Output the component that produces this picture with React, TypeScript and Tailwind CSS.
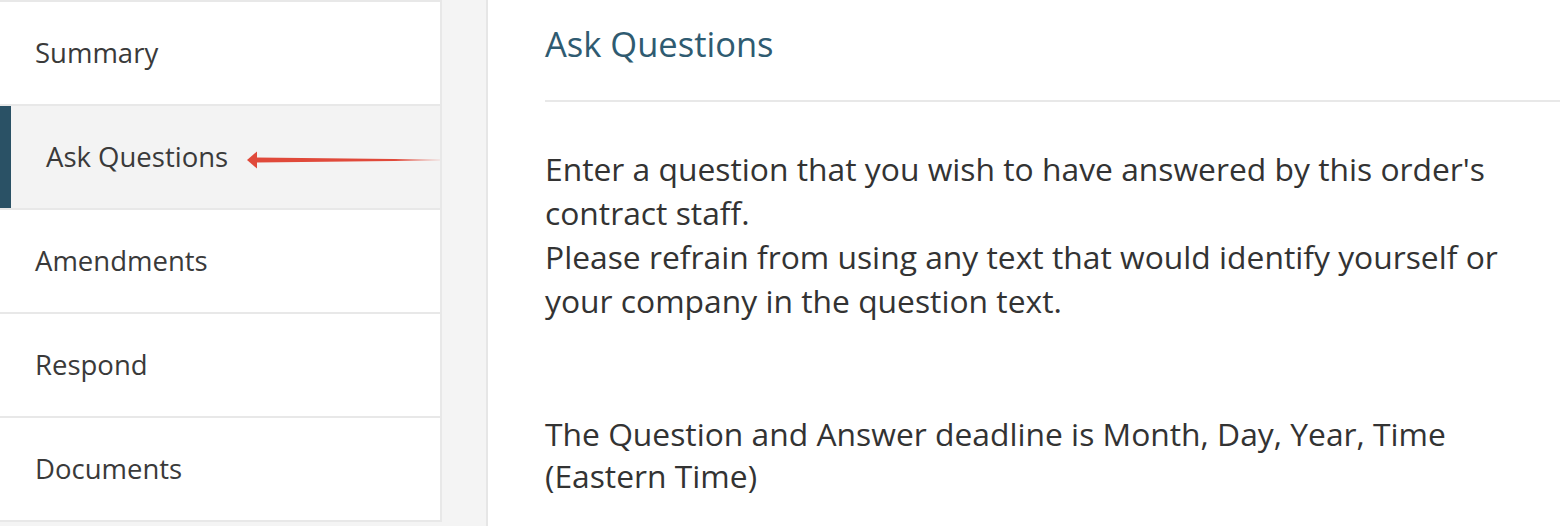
import React from "react";

const navItems = ["Summary", "Ask Questions", "Amendments", "Respond", "Documents"];

function Arrow() {
  return (
    <svg className="absolute left-[246px] top-[42px]" width="196" height="24" viewBox="0 0 196 24">
      <defs>
        <linearGradient id="shaft" x1="0" x2="1" y1="0" y2="0">
          <stop offset="0" stopColor="#e0493a" />
          <stop offset="0.75" stopColor="#e0493a" />
          <stop offset="1" stopColor="#e0493a" stopOpacity="0.15" />
        </linearGradient>
      </defs>
      <path d="M10 9.5 L194 11.6 L194 12.4 L10 14.5 Z" fill="url(#shaft)" />
      <path d="M1 12 L11 3.5 L11 20.5 Z" fill="#e0493a" />
    </svg>
  );
}

function NavItem({ label, active }: { label: string; active: boolean }) {
  return (
    <div
      className={`relative flex h-[104px] items-center border-b-2 border-[#e8e8e8] ${
        active ? "bg-[#f3f3f3] pl-[46px]" : "bg-white pl-[35px]"
      }`}
    >
      {active ? <div className="absolute left-0 top-0 h-full w-[11px] bg-[#2a5165]" /> : null}
      <span className="text-[27.5px] leading-[36px] text-[#3a3a3a]">{label}</span>
      {active ? <Arrow /> : null}
    </div>
  );
}

export default function App() {
  return (
    <div
      className="flex h-[526px] w-[1562px] overflow-hidden bg-[#f4f4f4]"
      style={{ fontFamily: '"Open Sans", "Noto Sans", sans-serif' }}
    >
      <nav className="w-[442px] shrink-0 self-start border-t-2 border-r-2 border-[#e8e8e8]">
        {navItems.map((item) => (
          <NavItem key={item} label={item} active={item === "Ask Questions"} />
        ))}
      </nav>
      <div className="w-[46px] shrink-0 border-r-2 border-[#e6e6e6]" />
      <main className="flex-1 bg-white pl-[57px] pr-[2px]">
        <h1 className="border-b-2 border-[#e8e8e8] pt-[23px] pb-[35px] text-[34.5px] leading-[42px] text-[#2f5b71]">
          Ask Questions
        </h1>
        <div className="pt-[45px] text-[31.8px] leading-[44px] text-[#333]">
          <p>
            Enter a question that you wish to have answered by this order's
            <br />
            contract staff.
            <br />
            Please refrain from using any text that would identify yourself or
            <br />
            your company in the question text.
          </p>
          <p className="mt-[90px] leading-[42px]">
            The Question and Answer deadline is Month, Day, Year, Time
            <br />
            (Eastern Time)
          </p>
        </div>
      </main>
    </div>
  );
}
